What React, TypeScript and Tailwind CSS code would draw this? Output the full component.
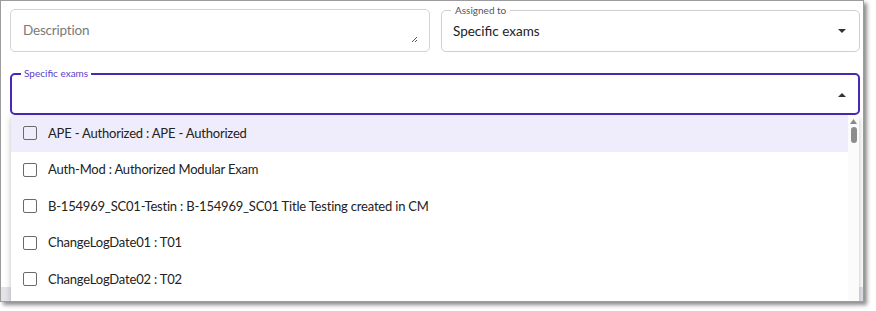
import React from "react";

const items = [
  "APE - Authorized : APE - Authorized",
  "Auth-Mod : Authorized Modular Exam",
  "B-154969_SC01-Testin : B-154969_SC01 Title Testing created in CM",
  "ChangeLogDate01 : T01",
  "ChangeLogDate02 : T02",
];

export default function App() {
  return (
    <div
      className="w-[876px] h-[311px] bg-white overflow-hidden"
      style={{ fontFamily: "Lato, 'Noto Sans', sans-serif" }}
    >
      <div className="relative w-[864px] h-[302px] border border-[#9c9c9c] bg-white shadow-[3px_3px_4px_rgba(0,0,0,0.45)] overflow-hidden">
        <div className="flex flex-col h-full">
          <div className="flex gap-[11px] pl-[9px] pr-[3px] pt-[8px]">
            {/* Description */}
            <div className="relative w-[420px] h-[43px] rounded-[5px] border border-[#d4d4d4] flex items-center pl-[12px]">
              <span className="text-[13.5px] tracking-[-0.2px] text-[#7a7a7a]">Description</span>
              <svg className="absolute right-[11px] top-[26px]" width="7" height="7" viewBox="0 0 7 7">
                <path d="M1 6 L6 1 M4 6 L6 4" stroke="#555" strokeWidth="1" />
              </svg>
            </div>
            {/* Assigned to */}
            <div className="relative w-[419px] h-[42px] mt-[1px] rounded-[5px] border border-[#cfcfcf] flex items-center pl-[11px] pr-[13px]">
              <span className="absolute -top-[7px] left-[9px] bg-white px-[4px] text-[10px] leading-[12px] text-[#555]">
                Assigned to
              </span>
              <span className="flex-1 text-[13.5px] text-[#222]">Specific exams</span>
              <svg width="8" height="4" viewBox="0 0 8 4">
                <path d="M0 0 L8 0 L4 4 Z" fill="#333" />
              </svg>
            </div>
          </div>
          {/* Specific exams */}
          <div className="pl-[9px] pr-[3px] mt-[21px]">
            <div className="relative w-[850px] h-[42px] rounded-[5px] border-2 border-[#4b27b5] flex items-center justify-end pr-[12px]">
              <span className="absolute -top-[8px] left-[9px] bg-white px-[3px] text-[10px] leading-[12px] text-[#5b3ec8]">
                Specific exams
              </span>
              <svg width="8" height="4" viewBox="0 0 8 4" className="mt-[1px]">
                <path d="M0 4 L8 4 L4 0 Z" fill="#333" />
              </svg>
            </div>
          </div>
          <div className="flex-1" />
          <div className="h-[14px] bg-[#e4e3ea]" />
        </div>

        {/* Dropdown popup */}
        <div className="absolute left-[10px] top-[114px] w-[848px] h-[200px] bg-white shadow-[0_3px_6px_rgba(0,0,0,0.25)] flex">
          <div className="flex-1 flex flex-col">
            {items.map((t, i) => (
              <div
                key={t}
                className={`h-[36.5px] shrink-0 flex items-center pl-[12px] ${i === 0 ? "bg-[#efecfc]" : ""}`}
              >
                <div className="w-[14px] h-[14px] border-[1.5px] border-[#6a6a6a] rounded-[2px]" />
                <span className="ml-[11px] text-[13px] tracking-[-0.2px] text-[#222]">{t}</span>
              </div>
            ))}
          </div>
          <div className="w-[11px] flex flex-col items-center pt-[4px] bg-[#fbfbfb]">
            <svg width="7" height="5" viewBox="0 0 7 5">
              <path d="M0 5 L7 5 L3.5 0 Z" fill="#8a8a8a" />
            </svg>
            <div className="mt-[3px] w-[6px] h-[16px] rounded-[3px] bg-[#8c8c8c]" />
          </div>
        </div>
      </div>
    </div>
  );
}
